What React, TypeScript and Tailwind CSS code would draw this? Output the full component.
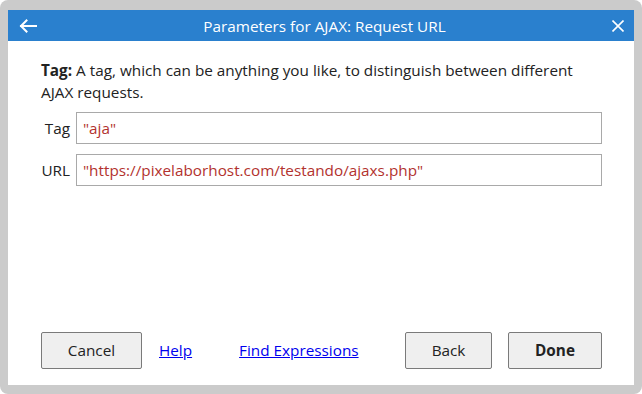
const ArrowLeft = () => (
  <svg width="18" height="14" viewBox="0 0 18 14" fill="none" stroke="white" strokeWidth="2" strokeLinecap="square">
    <path d="M17 7H2" />
    <path d="M7.5 1.5L2 7l5.5 5.5" />
  </svg>
)

const CloseX = () => (
  <svg width="12" height="12" viewBox="0 0 12 12" fill="none" stroke="white" strokeWidth="1.6">
    <path d="M0.5 0.5l11 11M11.5 0.5l-11 11" />
  </svg>
)

const Field = ({ label, value }: { label: string; value: string }) => (
  <div className="flex items-center">
    <div className="w-[35px] text-right pr-[6px] text-[#222]">{label}</div>
    <div className="flex-1 h-[32px] border border-[#a9a9a9] flex items-center px-[6px] text-[#b2322e]">{value}</div>
  </div>
)

const Button = ({ children, bold }: { children: string; bold?: boolean }) => (
  <button className={`h-[37px] border border-[#7a7a7a] rounded-[2px] bg-[#efefef] text-[#222] ${bold ? 'font-bold' : ''}`}>
    {children}
  </button>
)

export default function App() {
  return (
    <div
      className="w-[642px] h-[394px] bg-[#cbcbcb] rounded-[8px] pt-[10px] pl-[8px] pr-[8px] pb-[9px] text-[15.3px]"
      style={{ fontFamily: '"Open Sans", "Noto Sans", sans-serif' }}
    >
      <div className="h-full bg-white flex flex-col">
        <div className="h-[31px] bg-[#2a80ce] flex items-center justify-between pl-[11px] pr-[10px] text-white">
          <ArrowLeft />
          <div className="pt-[2px]">Parameters for AJAX: Request URL</div>
          <CloseX />
        </div>
        <div className="flex-1 flex flex-col pl-[33px] pr-[32px]">
          <p className="mt-[18px] max-w-[550px] leading-[22px] text-[#222]">
            <b>Tag:</b> A tag, which can be anything you like, to distinguish between different AJAX requests.
          </p>
          <div className="mt-[9px] flex flex-col gap-[10px]">
            <Field label="Tag" value={'"aja"'} />
            <Field label="URL" value={'"https://pixelaborhost.com/testando/ajaxs.php"'} />
          </div>
          <div className="mt-auto mb-[16px] flex items-center">
            <div className="w-[101px] grid"><Button>Cancel</Button></div>
            <a className="ml-[17px] text-[#0000ee] underline">Help</a>
            <a className="ml-[47px] text-[#0000ee] underline">Find Expressions</a>
            <div className="ml-auto flex gap-[16px]">
              <div className="w-[87px] grid"><Button>Back</Button></div>
              <div className="w-[94px] grid"><Button bold>Done</Button></div>
            </div>
          </div>
        </div>
      </div>
    </div>
  )
}
